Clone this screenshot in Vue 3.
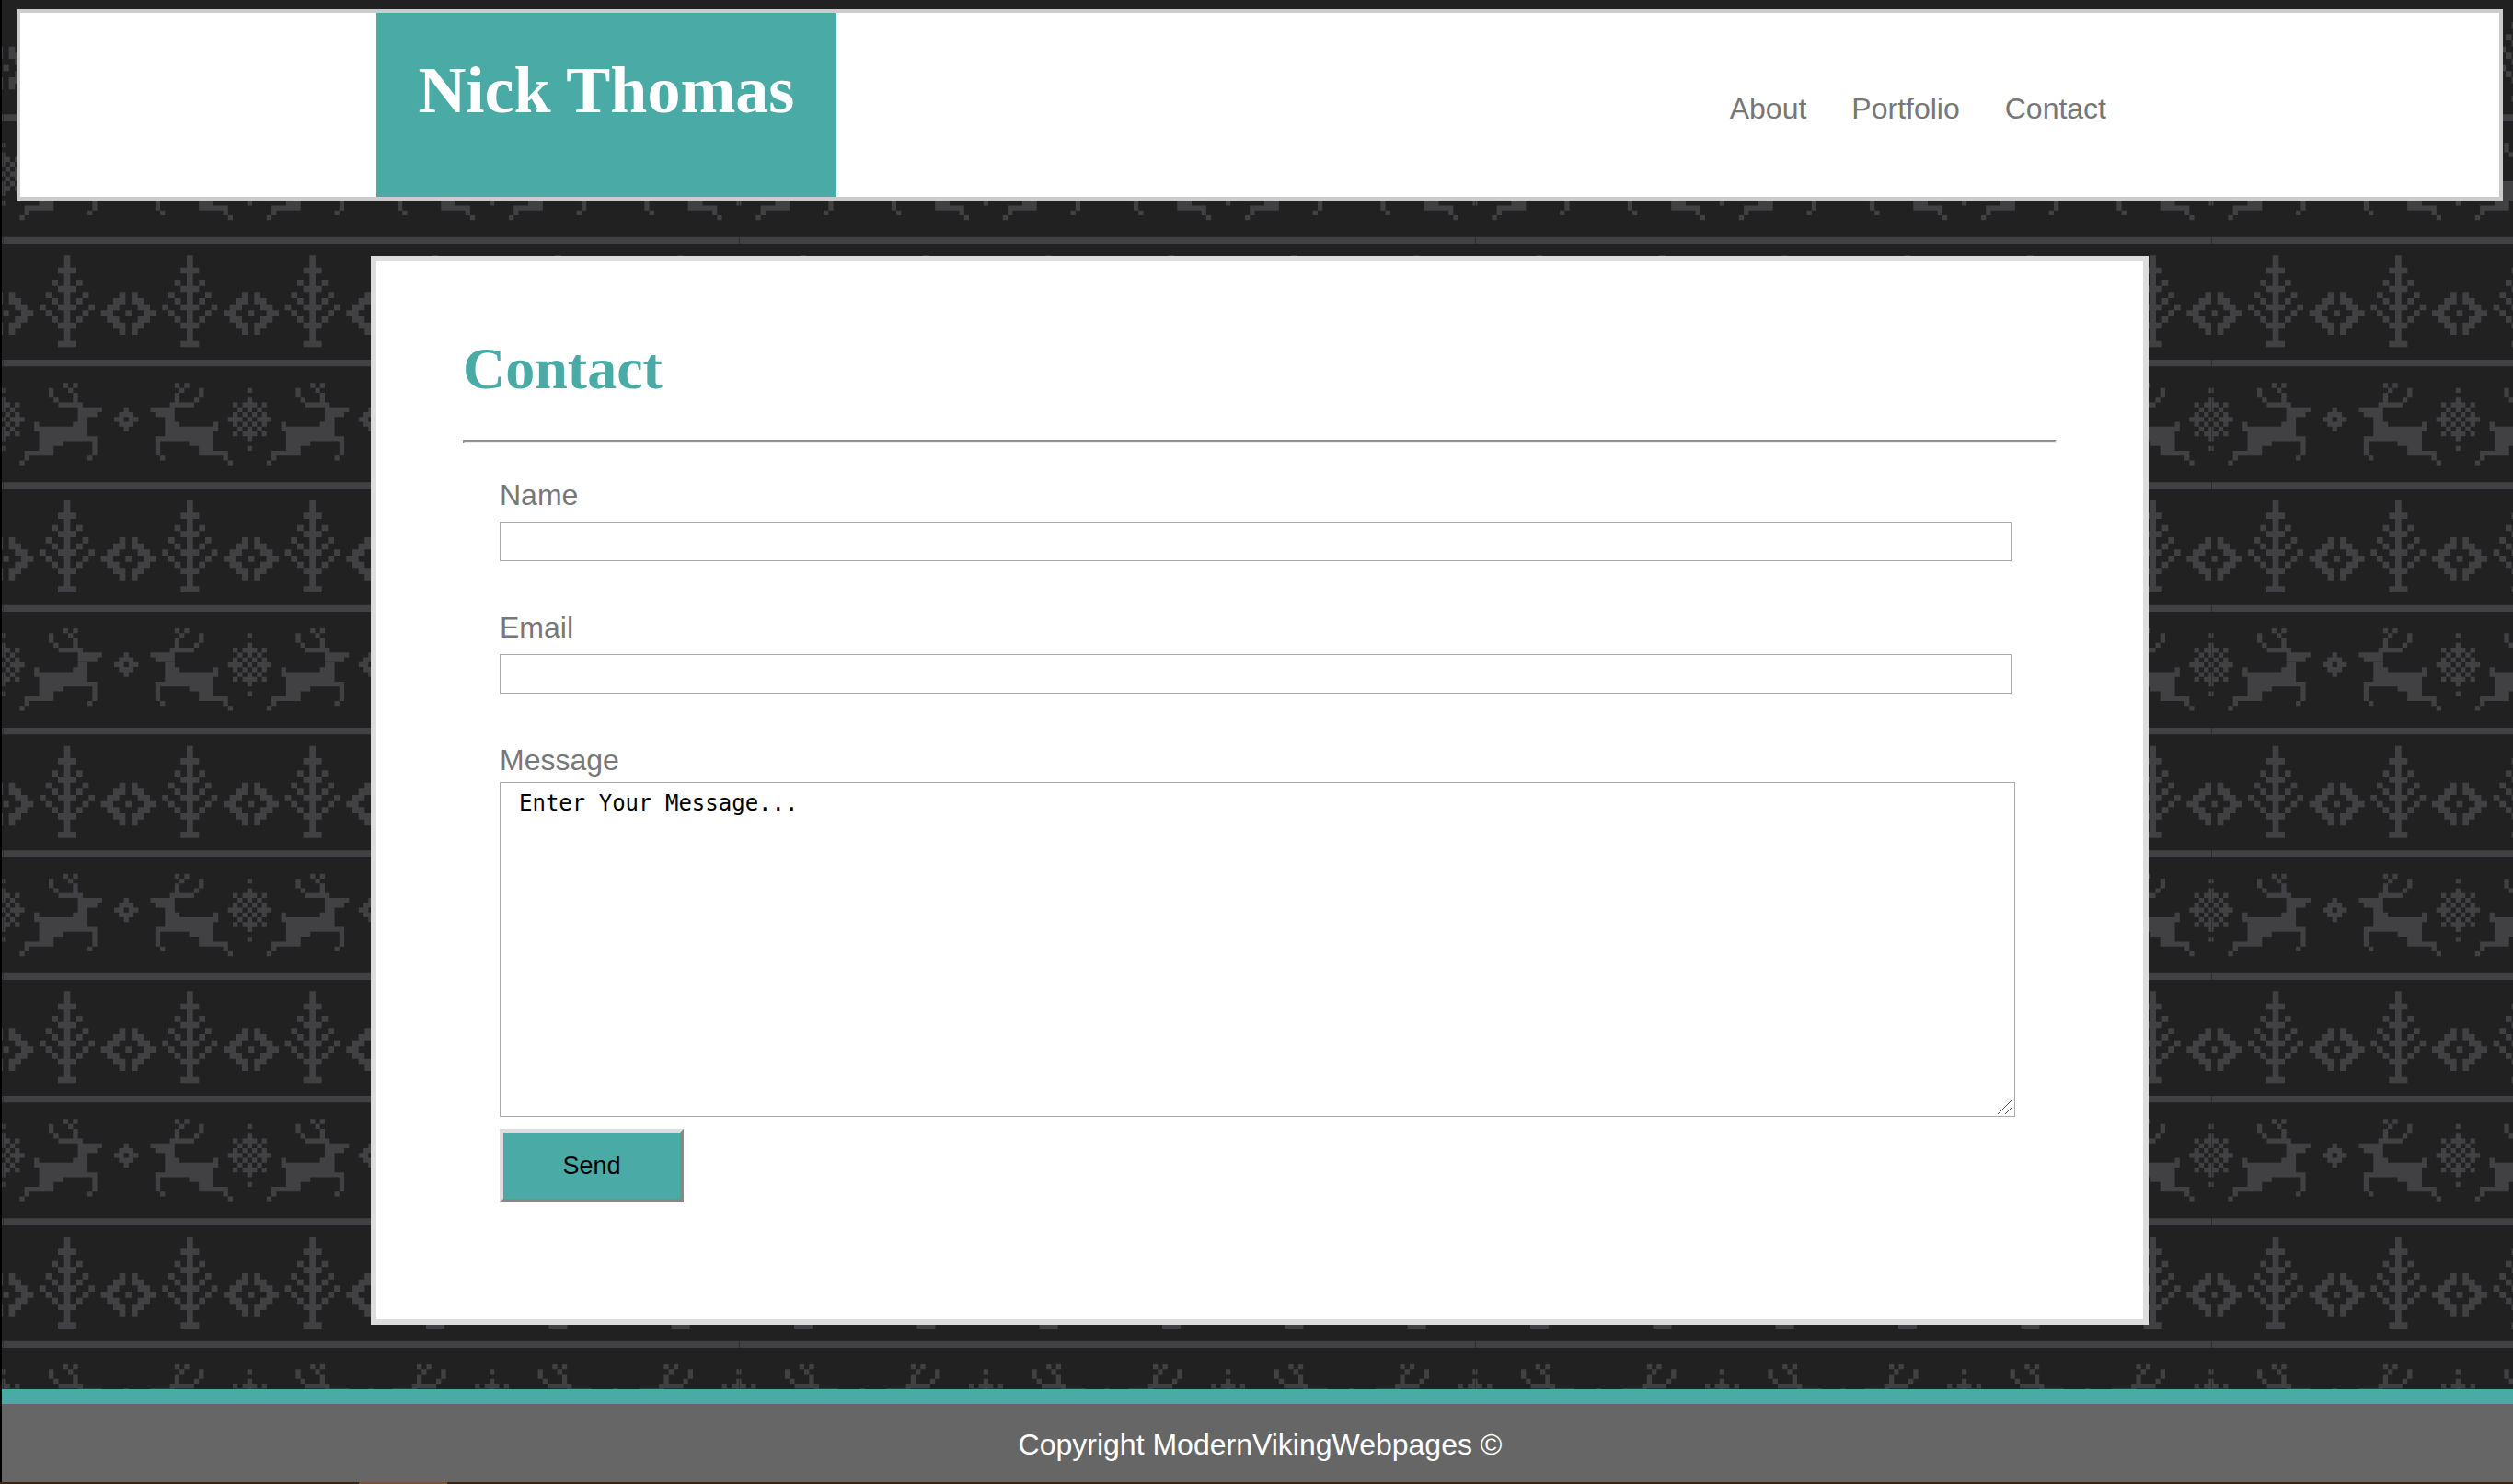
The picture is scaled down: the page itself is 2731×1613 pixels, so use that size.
<script setup>
import { reactive } from 'vue'

const links = ['About', 'Portfolio', 'Contact']
const form = reactive({ name: '', email: '', message: 'Enter Your Message...' })

// Knitted motifs, one character per stitch
const tree = [
  '....#....',
  '....#....',
  '...###...',
  '....#....',
  '..#.#.#..',
  '...###...',
  '.#..#..#.',
  '..#.#.#..',
  '#..###..#',
  '.#..#..#.',
  '..#.#.#..',
  '...###...',
  '....#....',
  '....#....',
  '...###...',
]
const diamond = [
  '...#.#...',
  '..##.##..',
  '.##...##.',
  '##..#..##',
  '.##...##.',
  '..##.##..',
  '...#.#...',
]
const deer = [
  '.........#.#.....',
  '......#...#......',
  '......#....#.....',
  '.......#...#.....',
  '........#####....',
  '............#####',
  '............####.',
  '............##...',
  '...#.......###...',
  '...###########...',
  '....##########...',
  '....############.',
  '....#####......#.',
  '....###........#.',
  '.######........#.',
  '.#............#..',
  '#................',
]
const mirrored = deer.map((row) => [...row].reverse().join(''))
const smallStar = ['..#..', '.###.', '##.##', '.###.', '..#..']
const flake = [
  '....#....',
  '.........',
  '....#....',
  '.#.###.#.',
  '..#.#.#..',
  '.#.#.#.#.',
  '###.#.###',
  '.#.#.#.#.',
  '..#.#.#..',
  '.#.###.#.',
  '....#....',
  '.........',
  '....#....',
]

// Each horizontal run of stitches becomes one rectangle of the path
function stitch(rows, x, y, size) {
  let d = ''
  rows.forEach((row, r) => {
    for (const run of row.matchAll(/#+/g)) {
      const w = (run[0].length * size).toFixed(2)
      const h = size.toFixed(2)
      d += `M${(x + run.index * size).toFixed(2)} ${(y + r * size).toFixed(2)}h${w}v${h}h-${w}z`
    }
  })
  return d
}

const TILE = 800
const big = TILE / 120
const small = TILE / 152
let knit = ''
for (let band = 0; band < 3; band++) {
  const top = (band * TILE) / 3
  knit += `M0 ${top.toFixed(2)}h${TILE}v7.3h-${TILE}z`
  knit += `M0 ${(top + TILE / 6).toFixed(2)}h${TILE}v7.3h-${TILE}z`
  for (let i = 0; i < 6; i++) {
    knit += stitch(tree, (i * 20 + 6) * big, top + 19.7, big)
  }
  for (let i = 0; i < 7; i++) {
    knit += stitch(diamond, (i * 20 - 4) * big, top + 59.7, big)
  }
  for (const start of [0, 51, 101, 152]) {
    knit += stitch(flake, (start - 4.5) * small, top + 164, small)
  }
  for (const [start, gap] of [[0, 51], [51, 50], [101, 51]]) {
    knit += stitch(deer, (start + 3.5) * small, top + 158.7, small)
    knit += stitch(mirrored, (start + gap - 20.5) * small, top + 158.7, small)
    knit += stitch(smallStar, (start + gap / 2 - 2.5) * small, top + 185, small)
  }
}
</script>

<template>
  <div class="page">
    <svg class="backdrop" aria-hidden="true">
      <defs>
        <pattern id="knit" x="1" y="-9" width="800" height="800" patternUnits="userSpaceOnUse">
          <rect width="800" height="800" fill="#212121" />
          <path :d="knit" fill="#414143" />
          <rect width="1" height="800" fill="#212121" opacity="0.6" />
        </pattern>
      </defs>
      <rect width="100%" height="100%" fill="url(#knit)" />
    </svg>

    <header class="banner">
      <div class="banner-inner">
        <h1 class="logo">Nick Thomas</h1>
        <nav class="nav">
          <a v-for="link in links" :key="link" :href="'#' + link.toLowerCase()">{{ link }}</a>
        </nav>
      </div>
    </header>

    <main class="main">
      <section class="card">
        <h2 class="title">Contact</h2>
        <hr class="rule" />
        <form class="form" @submit.prevent>
          <div class="field">
            <label for="name">Name</label>
            <input id="name" v-model="form.name" type="text" />
          </div>
          <div class="field">
            <label for="email">Email</label>
            <input id="email" v-model="form.email" type="email" />
          </div>
          <div class="message">
            <label for="message">Message</label>
            <div class="area">
              <textarea id="message" v-model="form.message" spellcheck="false"></textarea>
              <svg class="grip" viewBox="0 0 18 18" aria-hidden="true">
                <path d="M1 17L17 1M9 17L17 9" stroke="#555" fill="none" />
              </svg>
            </div>
          </div>
          <button class="send" type="submit">Send</button>
        </form>
      </section>
    </main>

    <footer class="footer">Copyright ModernVikingWebpages ©</footer>
    <div class="edge"><span></span></div>
  </div>
</template>

<style>
body {
  margin: 0;
  background: #212121;
}
</style>

<style scoped>
.page {
  position: relative;
  z-index: 0;
  box-sizing: border-box;
  min-height: 100vh;
  display: flex;
  flex-direction: column;
  border-left: 2px solid #000;
  font-family: "Liberation Sans", Arial, sans-serif;
  font-size: 32px;
  line-height: 37px;
  color: #777;
}
.backdrop {
  position: absolute;
  inset: 0;
  width: 100%;
  height: 100%;
  z-index: -1;
}
.banner {
  margin: 10px 11px 0 16px;
  border: 4px solid #ccc;
  background: #fff;
}
.banner-inner {
  display: flex;
  justify-content: space-between;
  max-width: 1920px;
  min-height: 200px;
  margin: 0 auto;
}
.logo {
  box-sizing: border-box;
  width: 500px;
  margin: 0;
  padding-top: 42px;
  background: #4aaaa5;
  color: #fff;
  font: bold 72px/84px "Liberation Serif", "Times New Roman", serif;
  text-align: center;
}
.nav {
  display: flex;
  gap: 49px;
  padding: 86px 40px 0 0;
}
.nav a {
  color: inherit;
  text-decoration: none;
}
.main {
  flex: 1;
  padding: 60px 11px 70px 16px;
}
.card {
  box-sizing: border-box;
  max-width: 1932px;
  margin: 0 auto;
  padding: 80px 94px 127px;
  border: 6px solid #ddd;
  background: #fff;
}
.title {
  margin: 0;
  color: #4aaaa5;
  font: bold 64px/74px "Liberation Serif", "Times New Roman", serif;
}
.rule {
  margin: 40px 0 38px;
  border: 2px solid;
  border-color: #929292 #eee #eee #929292;
}
.form {
  padding: 0 45px 0 40px;
}
.field {
  display: flex;
  flex-direction: column;
  gap: 10px;
  margin: 0 4px 54px 0;
}
.field input {
  box-sizing: border-box;
  width: 100%;
  height: 43px;
  padding: 0 20px;
  border: 1px solid #a9a9a9;
  background: #fff;
  font: inherit;
  font-size: 27px;
}
.message {
  display: flex;
  flex-direction: column;
  margin-bottom: 13px;
}
.area {
  position: relative;
  margin-top: 5px;
}
.area textarea {
  display: block;
  box-sizing: border-box;
  width: 100%;
  height: 364px;
  padding: 7px 20px;
  border: 1px solid #a9a9a9;
  background: #fff;
  color: #000;
  font: 24px/30px "DejaVu Sans Mono", monospace;
  resize: none;
}
.grip {
  position: absolute;
  right: 2px;
  bottom: 2px;
  width: 18px;
  height: 18px;
}
.send {
  display: block;
  box-sizing: border-box;
  width: 200px;
  height: 80px;
  padding: 0;
  border: 4px solid;
  border-color: #ddd #888 #888 #ddd;
  background: #4aaaa5;
  color: #000;
  font: 27px/31px "Liberation Sans", Arial, sans-serif;
}
.footer {
  padding: 26px 0 22px 6px;
  border-top: 16px solid #4aaaa5;
  background: #666;
  color: #fff;
  text-align: center;
}
.edge {
  height: 2px;
  margin-left: -2px;
  background: #3b2412;
}
.edge span {
  display: block;
  width: 96px;
  height: 2px;
  margin-left: 390px;
  background: #7f5224;
}
</style>
